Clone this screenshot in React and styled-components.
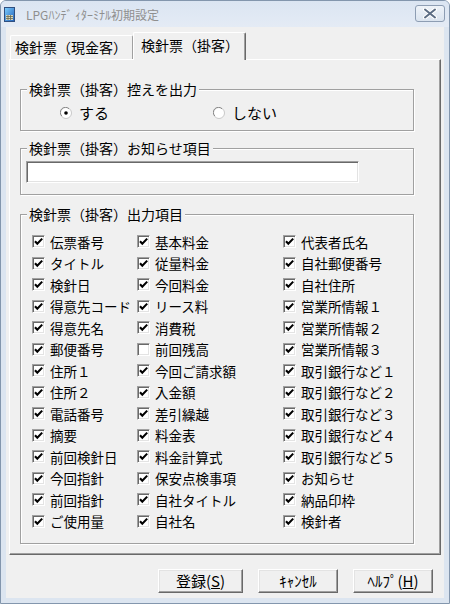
import React from 'react'
import styled, { createGlobalStyle } from 'styled-components'

const GlobalStyle = createGlobalStyle`
    html, body {
        margin: 0;
        padding: 0;
        background: #ffffff;
    }
    body {
        font-family: "Noto Sans CJK JP", "Noto Sans", sans-serif;
        color: #000;
    }
`

const Window = styled.div`
    width: 450px;
    height: 604px;
    box-sizing: border-box;
    display: flex;
    flex-direction: column;
    background: #dce5f0;
    border: 1px solid #8396ad;
    border-radius: 6px 6px 0 0;
    overflow: hidden;
`

const TitleBar = styled.div`
    height: 26px;
    flex: none;
    display: flex;
    align-items: center;
    padding: 0 4px 0 3px;
    background: linear-gradient(#dbe5f2, #e4ebf5);
`

const Title = styled.span`
    flex: 1;
    margin-left: 10px;
    font-size: 12px;
    color: #8f8f8f;
    white-space: pre;
`

const CloseButton = styled.div`
    width: 30px;
    height: 17px;
    box-sizing: border-box;
    margin-top: -2px;
    border: 1px solid #8d9db3;
    border-radius: 3px;
    background: linear-gradient(#eef3f9, #dbe4ef);
    display: flex;
    align-items: center;
    justify-content: center;
`

const Client = styled.div`
    flex: 1;
    margin: 0 5px 5px;
    background: #f0f0f0;
    display: flex;
    flex-direction: column;
`

const TabStrip = styled.div`
    height: 32px;
    display: flex;
    align-items: flex-end;
    padding-left: 4px;
    position: relative;
    z-index: 1;
`

const Tab = styled.div`
    box-sizing: border-box;
    height: ${p => p.$active ? 28 : 24}px;
    margin-bottom: ${p => p.$active ? -1 : 0}px;
    padding: ${p => p.$active ? '2px 6px 0 7px' : '1px 5px 0 4px'};
    font-size: 14px;
    line-height: 20px;
    white-space: nowrap;
    background: #f0f0f0;
    border-top: 1px solid #ffffff;
    border-left: 1px solid #ffffff;
    border-right: 1px solid ${p => p.$active ? '#696969' : '#a0a0a0'};
    box-shadow: ${p => p.$active ? 'inset -1px 0 0 #a0a0a0' : 'none'};
    border-radius: 2px 2px 0 0;
`

const Panel = styled.div`
    box-sizing: border-box;
    width: 432px;
    height: 496px;
    margin-left: 3px;
    padding: 29px 0 0 10px;
    border-top: 1px solid #ffffff;
    border-left: 1px solid #ffffff;
    border-right: 1px solid #696969;
    border-bottom: 1px solid #696969;
    box-shadow: inset -1px -1px 0 #a0a0a0;
    display: flex;
    flex-direction: column;
`

const Group = styled.div`
    position: relative;
    box-sizing: border-box;
    width: 394px;
    height: ${p => p.$h}px;
    margin-top: ${p => p.$gap || 0}px;
    padding: ${p => p.$pad};
    border: 1px solid #a0a0a0;
    box-shadow: inset 1px 1px 0 #ffffff, 1px 1px 0 #ffffff;
`

const Legend = styled.span`
    position: absolute;
    top: -10px;
    left: 6px;
    padding: 0 2px;
    background: #f0f0f0;
    font-size: 14px;
    line-height: 19px;
    white-space: nowrap;
`

const RadioRow = styled.div`
    display: grid;
    grid-template-columns: 153px auto;
    height: 16px;
    align-items: center;
`

const RadioItem = styled.label`
    display: flex;
    align-items: center;
    gap: 7px;
    font-size: 15px;
    line-height: 16px;
`

const TextBox = styled.div`
    box-sizing: border-box;
    width: 333px;
    height: 22px;
    background: #ffffff;
    border: 1px solid;
    border-color: #a0a0a0 #ffffff #ffffff #a0a0a0;
    box-shadow: inset 1px 1px 0 #696969, inset -1px -1px 0 #e3e3e3;
`

const CheckGrid = styled.div`
    display: grid;
    grid-template-columns: 105px 146px 1fr;
    grid-template-rows: repeat(14, 21.5px);
    grid-auto-flow: column;
`

const CheckItem = styled.label`
    display: flex;
    align-items: center;
    gap: 5px;
    font-size: 13.5px;
    white-space: nowrap;
`

const Box = styled.span`
    width: 13px;
    height: 13px;
    flex: none;
    box-sizing: border-box;
    background: #ffffff;
    border: 1px solid;
    border-color: #a0a0a0 #ffffff #ffffff #a0a0a0;
    box-shadow: inset 1px 1px 0 #696969, inset -1px -1px 0 #e3e3e3;
    display: flex;
    align-items: center;
    justify-content: center;
`

const ButtonRow = styled.div`
    display: flex;
    justify-content: flex-end;
    gap: 15px;
    padding: 14px 11px 0 0;
`

const Button = styled.div`
    box-sizing: border-box;
    width: ${p => p.$w}px;
    height: 24px;
    font-size: 15px;
    line-height: 21px;
    text-align: center;
    background: #f0f0f0;
    border: 1px solid;
    border-color: #ffffff #696969 #696969 #ffffff;
    box-shadow: inset -1px -1px 0 #a0a0a0, inset 1px 1px 0 #e3e3e3;
`

const AppIcon = () => (
    <svg width="12" height="15" viewBox="0 0 12 15">
        <defs>
            <linearGradient id="ig" x1="0" y1="0" x2="1" y2="1">
                <stop offset="0" stopColor="#7fd0ff" />
                <stop offset="1" stopColor="#1f5fb8" />
            </linearGradient>
        </defs>
        <rect x="0.5" y="0.5" width="10" height="14" fill="url(#ig)" stroke="#2f4f80" />
        <rect x="2" y="8" width="7" height="5" fill="#d8d8c0" />
        <path d="M2 9.5H9M2 11.5H9M4 8V13M6.5 8V13" stroke="#6a6a50" strokeWidth="0.8" />
    </svg>
)

const CloseGlyph = () => (
    <svg width="14" height="11" viewBox="0 0 14 11">
        <path d="M2 1.5 L12 9.5 M12 1.5 L2 9.5" stroke="#ffffff" strokeWidth="4" strokeLinecap="round" />
        <path d="M2 1.5 L12 9.5 M12 1.5 L2 9.5" stroke="#5c6d84" strokeWidth="2" strokeLinecap="round" />
    </svg>
)

const Radio = ({ checked }) => (
    <svg width="12" height="12" viewBox="0 0 12 12">
        <circle cx="6" cy="6" r="5.5" fill="#ffffff" stroke="#c8c8c8" />
        <path d="M1.8 9 A5 5 0 0 1 9 1.8" fill="none" stroke="#8a8a8a" strokeWidth="1" />
        {checked && <circle cx="6" cy="6" r="1.8" fill="#000" />}
    </svg>
)

const CheckBox = ({ checked }) => (
    <Box>
        {checked && <svg width="9" height="9" viewBox="0 0 9 9">
            <polyline points="1,4.2 3.3,6.8 8.2,1.6" fill="none" stroke="#000" strokeWidth="2.1" />
        </svg>}
    </Box>
)

const columns = [
    ['伝票番号', 'タイトル', '検針日', '得意先コード', '得意先名', '郵便番号', '住所１', '住所２', '電話番号', '摘要', '前回検針日', '今回指針', '前回指針', 'ご使用量'],
    ['基本料金', '従量料金', '今回料金', 'リース料', '消費税', '!前回残高', '今回ご請求額', '入金額', '差引繰越', '料金表', '料金計算式', '保安点検事項', '自社タイトル', '自社名'],
    ['代表者氏名', '自社郵便番号', '自社住所', '営業所情報１', '営業所情報２', '営業所情報３', '取引銀行など１', '取引銀行など２', '取引銀行など３', '取引銀行など４', '取引銀行など５', 'お知らせ', '納品印枠', '検針者'],
]

export default function App() {

    return <>
        <GlobalStyle />
        <Window>

            <TitleBar>
                <AppIcon />
                <Title>LPGﾊﾝﾃﾞ ｨﾀｰﾐﾅﾙ初期設定</Title>
                <CloseButton><CloseGlyph /></CloseButton>
            </TitleBar>

            <Client>

                <TabStrip>
                    <Tab>検針票（現金客）</Tab>
                    <Tab $active>検針票（掛客）</Tab>
                </TabStrip>

                <Panel>

                    <Group $h={42} $pad="15px 0 0 39px">
                        <Legend>検針票（掛客）控えを出力</Legend>
                        <RadioRow>
                            <RadioItem><Radio checked />する</RadioItem>
                            <RadioItem><Radio />しない</RadioItem>
                        </RadioRow>
                    </Group>

                    <Group $h={47} $gap={17} $pad="12px 0 0 5px">
                        <Legend>検針票（掛客）お知らせ項目</Legend>
                        <TextBox />
                    </Group>

                    <Group $h={330} $gap={19} $pad="16px 0 0 11px">
                        <Legend>検針票（掛客）出力項目</Legend>
                        <CheckGrid>
                            {columns.flat().map(label => {
                                let off = label.startsWith('!')
                                return <CheckItem key={label}>
                                    <CheckBox checked={!off} />
                                    {off ? label.slice(1) : label}
                                </CheckItem>
                            })}
                        </CheckGrid>
                    </Group>

                </Panel>

                <ButtonRow>
                    <Button $w={85}>登録(<u>S</u>)</Button>
                    <Button $w={80}>ｷｬﾝｾﾙ</Button>
                    <Button $w={80}>ﾍﾙﾌﾟ(<u>H</u>)</Button>
                </ButtonRow>

            </Client>

        </Window>
    </>

}
